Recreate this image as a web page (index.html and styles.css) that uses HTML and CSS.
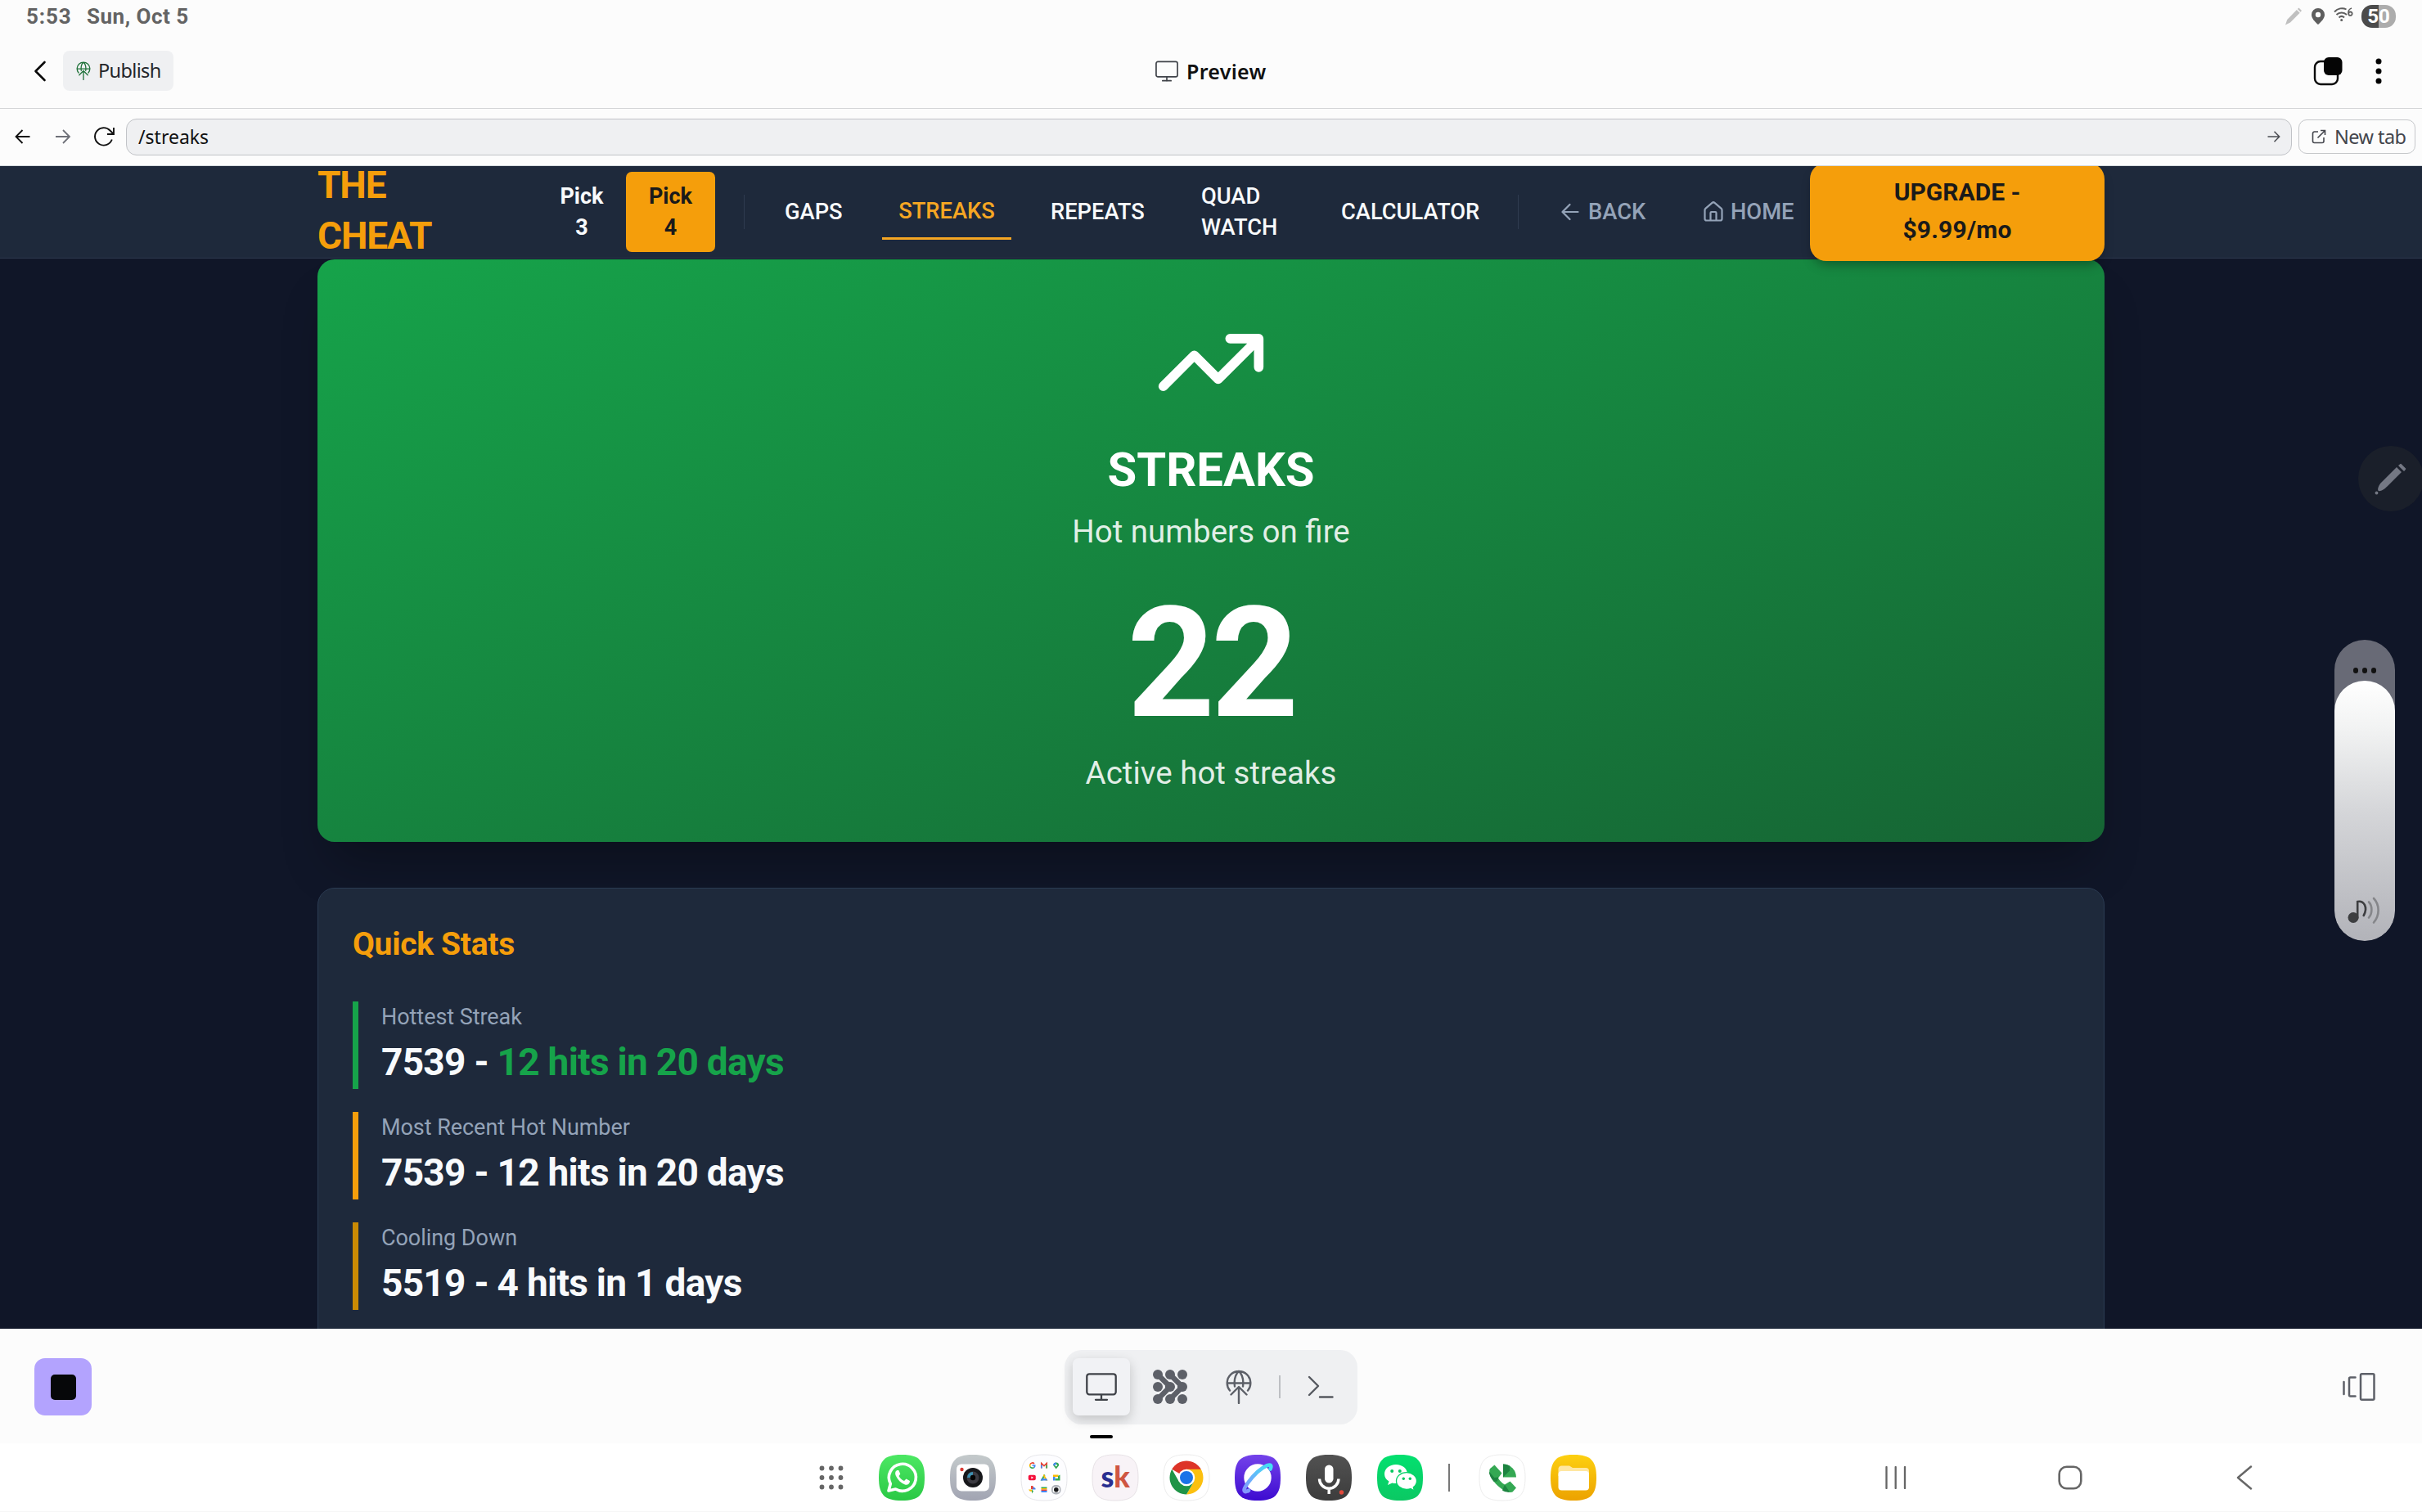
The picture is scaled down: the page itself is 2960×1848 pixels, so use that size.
FILE: index.html
```html
<!DOCTYPE html>
<html lang="en">
<head>
<meta charset="utf-8">
<title>Preview</title>
<link rel="stylesheet" href="styles.css">
</head>
<body>
<div class="screen">
  <header class="status">
    <span class="clock">5:53</span><span class="date">Sun, Oct 5</span>
    <div class="status-icons">
      <svg class="st-pen" width="22" height="22" viewBox="0 0 22 22"><path d="M17.500 .5l3.500 3.500-1.500 1.700-3.600-3.600zM14.900 3l3.800 3.700L7 18.500 1 21.500 3.200 15z" fill="#c0c0c0"/></svg>
      <svg class="st-pin" width="18" height="22" viewBox="0 0 18 22"><path d="M9 1a8 8 0 0 0-8 8c0 4.500 4 8.500 8 12 4-3.500 8-7.500 8-12a8 8 0 0 0-8-8zm0 4.800a3.200 3.200 0 1 1 0 6.400 3.200 3.200 0 0 1 0-6.400z" fill="#5e5e5e" fill-rule="evenodd"/></svg>
      <svg class="st-wifi" width="26" height="20" viewBox="0 0 26 20"><g fill="none" stroke="#5e5e5e" stroke-width="2"><path d="M2 6.500C6 2 12 1 16.500 3.500M4.500 10c3.500-3.500 9-3.500 12.500 0M7.500 13.500c2-2 4.500-2 6.500 0"/><path d="M23 2c-3 1-4.500 4-4 6.500M21.500 6.500a2.200 2.200 0 1 1-.1 4.400 2.200 2.200 0 0 1 .1-4.400z" stroke-width="1.800"/></g><circle cx="10.700" cy="16.500" r="1.500" fill="#5e5e5e"/></svg>
      <span class="battery">50</span>
    </div>
  </header>

  <div class="titlebar">
    <svg class="back" width="16" height="26" viewBox="0 0 16 26"><path d="M13.500 2L2.500 13l11 11" fill="none" stroke="#0b0b0b" stroke-width="2.600" stroke-linecap="round" stroke-linejoin="round"/></svg>
    <button class="publish"><svg width="18" height="23" viewBox="0 0 32 42"><use href="#globe-up"/></svg><span>Publish</span></button>
    <div class="title"><svg width="28" height="26" viewBox="0 0 38 34"><use href="#monitor"/></svg><span>Preview</span></div>
    <div class="title-actions">
      <svg width="36" height="36" viewBox="0 0 36 36"><rect x="2" y="6" width="28" height="28" rx="7" fill="none" stroke="#0b0b0b" stroke-width="2.400"/><rect x="13" y="1" width="22.500" height="22" rx="6" fill="#050505"/></svg>
      <svg width="10" height="34" viewBox="0 0 10 34"><circle cx="5" cy="5" r="3.500"/><circle cx="5" cy="17" r="3.500"/><circle cx="5" cy="29" r="3.500"/></svg>
    </div>
  </div>

  <div class="urlbar">
    <svg width="20" height="20" viewBox="0 0 20 20"><path d="M18.500 10H2M9.500 2L1.500 10l8 8" fill="none" stroke="#111" stroke-width="1.800"/></svg>
    <svg width="20" height="20" viewBox="0 0 20 20"><path d="M1 10h16.500M10 2l8 8-8 8" fill="none" stroke="#6e7078" stroke-width="1.800"/></svg>
    <svg width="26" height="26" viewBox="0 0 26 26"><path d="M22.800 16.500A10.700 10.700 0 1 1 20.500 5.500l4 4M25 2v8h-8" fill="none" stroke="#111" stroke-width="1.900"/></svg>
    <div class="url"><span>/streaks</span><svg width="16" height="16" viewBox="0 0 16 16"><path d="M.5 8h14M8.500 1.800L14.700 8l-6.200 6.200" fill="none" stroke="#4a4c52" stroke-width="1.500"/></svg></div>
    <button class="newtab"><svg width="18" height="18" viewBox="0 0 18 18"><path d="M8 3H3.500A2 2 0 0 0 1.500 5v9.500a2 2 0 0 0 2 2H13a2 2 0 0 0 2-2V10M11 1.500h5.500V7M16.500 1.500L7.500 10.500" fill="none" stroke="#44464d" stroke-width="1.600"/></svg><span>New tab</span></button>
  </div>

  <main class="site">
    <nav class="nav">
      <div class="logo"><span>THE</span><span>CHEAT</span></div>
      <div class="pick">Pick<br>3</div>
      <div class="pick on">Pick<br>4</div>
      <i class="rule"></i>
      <a class="n-gaps">GAPS</a>
      <a class="n-streaks current">STREAKS</a>
      <a class="n-repeats">REPEATS</a>
      <a class="n-quad">QUAD<br>WATCH</a>
      <a class="n-calc">CALCULATOR</a>
      <i class="rule rule2"></i>
      <a class="n-back muted"><svg width="22" height="22" viewBox="0 0 22 22"><path d="M20.500 11H2M10.500 2L1.500 11l9 9" fill="none" stroke="#94a3b8" stroke-width="2.200" stroke-linecap="round" stroke-linejoin="round"/></svg>BACK</a>
      <a class="n-home muted"><svg width="28" height="28" viewBox="0 0 24 24"><path d="M15 21v-8a1 1 0 0 0-1-1h-4a1 1 0 0 0-1 1v8M3 10a2 2 0 0 1 .709-1.528l7-5.999a2 2 0 0 1 2.582 0l7 5.999A2 2 0 0 1 21 10v9a2 2 0 0 1-2 2H5a2 2 0 0 1-2-2z" fill="none" stroke="#94a3b8" stroke-width="1.900" stroke-linejoin="round"/></svg>HOME</a>
      <button class="upgrade">UPGRADE -<br><span>$9.99/mo</span></button>
    </nav>

    <section class="hero">
      <svg width="140" height="140" viewBox="0 0 24 24"><path d="M22 7l-8.500 8.500-5-5L2 17M16 7h6v6" fill="none" stroke="#fff" stroke-width="2" stroke-linecap="round" stroke-linejoin="round"/></svg>
      <h1>STREAKS</h1>
      <p class="sub">Hot numbers on fire</p>
      <div class="count">22</div>
      <p class="caption">Active hot streaks</p>
    </section>

    <section class="stats">
      <h2>Quick Stats</h2>
      <div class="stat green"><small>Hottest Streak</small><b>7539 - <em>12 hits in 20 days</em></b></div>
      <div class="stat amber"><small>Most Recent Hot Number</small><b>7539 - 12 hits in 20 days</b></div>
      <div class="stat gold"><small>Cooling Down</small><b>5519 - 4 hits in 1 days</b></div>
    </section>
  </main>

  <footer class="tools">
    <button class="stop"><i></i></button>
    <div class="pill">
      <span class="tool"><svg width="38" height="34" viewBox="0 0 38 34"><use href="#monitor"/></svg><i class="marker"></i></span>
      <svg class="t-flow" width="42" height="42" viewBox="0 0 42 42"><g fill="#5d6068"><circle cx="6" cy="6" r="6"/><circle cx="21" cy="6" r="6"/><circle cx="36" cy="6" r="6"/><circle cx="6" cy="21" r="6"/><circle cx="21" cy="21" r="6"/><circle cx="36" cy="21" r="6"/><circle cx="6" cy="36" r="6"/><circle cx="21" cy="36" r="6"/><circle cx="36" cy="36" r="6"/></g><path d="M6 6l15 15L6 36M21 6l15 15-15 15" fill="none" stroke="#5d6068" stroke-width="6.500"/><path d="M15 17.500v7l-2 2.500 4.500-2zM30 17.500v7l-2 2.500 4.500-2z" fill="#5d6068"/></svg>
      <svg class="t-globe" width="32" height="42" viewBox="0 0 32 42"><use href="#globe-up"/></svg>
      <i class="vline"></i>
      <svg class="t-term" width="32" height="28" viewBox="0 0 32 28"><path d="M2 2l11 11L2 24M15 26.500h15.500" fill="none" stroke="#55585f" stroke-width="2.400" stroke-linecap="round" stroke-linejoin="round"/></svg>
    </div>
    <svg class="panels" width="40" height="34" viewBox="0 0 40 34"><g fill="none" stroke="#5d6068" stroke-width="2.500" stroke-linecap="round"><rect x="22" y="1.300" width="16.500" height="31.400" rx="1.500"/><path d="M15.500 5.500H9.500A1.500 1.500 0 0 0 8 7v20a1.500 1.500 0 0 0 1.500 1.500h6M1.500 11v15"/></g></svg>
  </footer>

  <div class="dock">
    <div class="apps">
      <svg class="grid" width="58" height="58" viewBox="0 0 58 58"><g fill="#666"><circle cx="17.500" cy="17.500" r="2.900"/><circle cx="29" cy="17.500" r="2.900"/><circle cx="40.500" cy="17.500" r="2.900"/><circle cx="17.500" cy="29" r="2.900"/><circle cx="29" cy="29" r="2.900"/><circle cx="40.500" cy="29" r="2.900"/><circle cx="17.500" cy="40.500" r="2.900"/><circle cx="29" cy="40.500" r="2.900"/><circle cx="40.500" cy="40.500" r="2.900"/></g></svg>
      <svg width="58" height="58" viewBox="0 0 58 58"><use href="#tile" fill="url(#g-wa)"/><path d="M13 45l2.300-8.500A16.500 16.500 0 1 1 21.500 43z" fill="none" stroke="#fff" stroke-width="3.600" stroke-linejoin="round"/><path d="M23.500 20c-2.500 1-3 4-1.500 7 2.500 5 6 8.500 11 10.500 3 1 6-1 6-4.500l-4.500-2.500-2.500 2.500c-3-1.200-5-3.200-6.500-6l1.800-2.500-2-4.500z" fill="#fff"/></svg>
      <svg width="58" height="58" viewBox="0 0 58 58"><use href="#tile" fill="url(#g-cam)"/><rect x="9" y="12.500" width="40" height="33" rx="6" fill="#fff"/><circle cx="15.500" cy="19" r="2.200" fill="#d83a34"/><circle cx="29" cy="29" r="12" fill="#17181b"/><circle cx="29" cy="29" r="7.500" fill="#3c3b42"/><path d="M22 29a7 7 0 0 1 7-7v4a3 3 0 0 0-3 3z" fill="#3d8fb0"/><circle cx="29" cy="29" r="3.200" fill="#050505"/></svg>
      <svg width="60" height="60" viewBox="-1 -1 60 60"><use href="#tile" fill="#fdfdff" stroke="#e6e6ea"/><g fill="none" stroke-width="1.700"><path d="M17 11.800a3.200 3.200 0 0 0-5 .8" stroke="#ea4335"/><path d="M12 12.600a3.500 3.500 0 0 0 0 3" stroke="#fbbc04"/><path d="M12 15.600a3.200 3.200 0 0 0 4.700 1" stroke="#34a853"/><path d="M16.700 16.600a3 3 0 0 0 1-2.600h-3.200" stroke="#4285f4"/><path d="M25.800 17.500v-6l3.200 3 3.200-3v6" stroke="#ea4335"/><path d="M25.800 17.500v-4" stroke="#4285f4"/><path d="M32.200 17.500v-4" stroke="#34a853"/></g><path d="M43.700 10.500a3.500 3.500 0 0 0-3.500 3.500l3.500 4.500 3.500-4.500a3.500 3.500 0 0 0-3.500-3.500z" fill="#34a853"/><path d="M40.200 14a3.500 3.500 0 0 1 3.500-3.500v3.500z" fill="#4285f4"/><circle cx="43.700" cy="14" r="1.200" fill="#fff"/><rect x="9.800" y="25.800" width="9" height="6.400" rx="1.800" fill="#f5103c"/><path d="M13.400 27.500v3l2.600-1.500z" fill="#fff"/><path d="M29 25l-4.300 7.500h2.500L30.500 26z" fill="#34a853"/><path d="M29 25l4.300 7.500h-2.500L27.700 26z" fill="#fbbc04"/><path d="M24.700 32.500h8.600l-1.200-2.200h-6.200z" fill="#4285f4"/><rect x="40" y="25.500" width="6.500" height="2.500" fill="#fbbc04"/><path d="M40 28h2.500v4.500H40z" fill="#4285f4"/><path d="M42.500 30h6v2.500h-6zM46 27l2.500-1.500v6H46z" fill="#34a853"/><path d="M14 39v4.500h4.500V42z" fill="#4285f4"/><path d="M10 43.500h4V46l-2.500-.5z" fill="#fbbc04"/><path d="M14 43.500V48.500l2-3z" fill="#34a853"/><path d="M15.500 39h-2.500v4h2.500z" fill="#ea4335"/><path d="M25.500 40.500h7V42h-7z" fill="#34a853"/><path d="M25.500 42h7v1.500h-7z" fill="#fbbc04"/><path d="M25.500 43.500h7V45h-7z" fill="#ea4335"/><path d="M25.500 45h7v2h-7z" fill="#4285f4"/><rect x="38" y="38" width="11.500" height="11.500" rx="5" fill="#adb1b8"/><rect x="39.800" y="40.500" width="8" height="6.500" rx="1.500" fill="#fff"/><circle cx="43.800" cy="43.800" r="2.800" fill="#17181b"/></svg>
      <span class="sk"><svg width="58" height="58" viewBox="0 0 58 58"><use href="#tile" fill="#f8f3f7" stroke="#e7e2e6"/></svg><span><b>s</b><b class="k">k</b></span></span>
      <svg width="58" height="58" viewBox="0 0 58 58"><use href="#tile" fill="#fff" stroke="#ececec"/><path d="M29 29L11.250 18.750A20.500 20.500 0 0 1 46.750 18.750z" fill="#dd3428"/><path d="M29 18.750h17.750A20.500 20.500 0 0 1 29 49.500l9-15.500z" fill="#fcc010"/><path d="M11.250 18.750A20.500 20.500 0 0 0 29 49.500L38 34l-9 5-9-5z" fill="#1f9447"/><circle cx="29" cy="29" r="10.300" fill="#fff"/><circle cx="29" cy="29" r="8" fill="#1a73e8"/></svg>
      <svg width="58" height="58" viewBox="0 0 58 58"><use href="#tile" fill="url(#g-net)"/><circle cx="29" cy="29" r="16.700" fill="#fff"/><path d="M44.500 18.500c2-4.500.5-6-4-4.300C33 17.500 24 26 17 35.500c-3.500 5-5.500 8.500-4 10 1 1 3 .5 5-.8" fill="none" stroke="url(#g-ring)" stroke-width="4.600" stroke-linecap="round"/></svg>
      <svg width="58" height="58" viewBox="0 0 58 58"><use href="#tile" fill="url(#g-mic)"/><rect x="24" y="13.500" width="10.500" height="22" rx="5.250" fill="#fff"/><path d="M17.500 30.500a11.700 11.700 0 0 0 23.400 0M29.200 42v7" fill="none" stroke="#fff" stroke-width="3.400"/><circle cx="44.500" cy="47" r="2.700" fill="#e3493b"/></svg>
      <svg width="58" height="58" viewBox="0 0 58 58"><use href="#tile" fill="url(#g-wc)"/><path d="M24 13c-8 0-14 5-14 11.500 0 4 2 7 5.500 9L14 38l5.500-2.500c7.500 2 18.500-2 18.500-11C38 18 32 13 24 13z" fill="#fff"/><path d="M37 22.700c-7 0-12.500 4.500-12.500 10.300S30 43.300 37 43.300c1.800 0 3.500-.2 5-.8l4.500 2.500-1.200-4.300c2.700-2 4.200-4.600 4.200-7.700 0-5.800-5.500-10.300-12.500-10.300z" fill="#fff" stroke="#05d268" stroke-width="1.300"/><g fill="#05c85f"><circle cx="19.200" cy="21" r="2"/><circle cx="28.800" cy="21" r="2"/><circle cx="33.300" cy="30.300" r="1.700"/><circle cx="41.300" cy="30.300" r="1.700"/></g></svg>
      <i class="dock-line"></i>
      <svg width="58" height="58" viewBox="0 0 58 58"><use href="#tile" fill="#fff" stroke="#ededed"/><path d="M19.500 13.500l-5.500 4.500c-2.500 3.500 1.500 13.500 9 20.500s15 9.500 18.500 8l4.500-5-7.500-8-6.500 4c-3.500-2-6-4.500-8-8l4.500-6z" fill="#34a853"/><path d="M12.800 21.500l6.500 7.500 5-.5-1.500 5-4 .5c-4-4.500-6-9-6-12.500zM32 37.500l6 9.200c-3 .3-6.500-.5-9-2.200z" fill="#1d8340"/><path d="M30 12.500A16 16 0 0 1 46 28.500H30z" fill="#34a853"/><path d="M30 12.500c3 0 5.500.7 8 2v6L30 28.500z" fill="#1d8340"/></svg>
      <svg width="58" height="58" viewBox="0 0 58 58"><use href="#tile" fill="url(#g-file)"/><path d="M10.500 19a4 4 0 0 1 4-4.500h9.500l4 2.500h16a4 4 0 0 1 4 4v6h-37.500z" fill="#ffe7a0"/><rect x="10.500" y="21" width="37.500" height="23.500" rx="4" fill="#fff"/></svg>
    </div>
    <svg class="k-recents" width="26" height="28" viewBox="0 0 26 28"><path d="M1.500 1v26M12.700 1v26M24 1v26" stroke="#666" stroke-width="2.300" stroke-linecap="round"/></svg>
    <svg class="k-home" width="30" height="30" viewBox="0 0 30 30"><rect x="1.700" y="1.700" width="26.600" height="26.600" rx="9" fill="none" stroke="#666" stroke-width="2.600"/></svg>
    <svg class="k-back" width="20" height="30" viewBox="0 0 20 30"><path d="M18 1.500L2 15l16 13.500" fill="none" stroke="#666" stroke-width="2.400" stroke-linecap="round" stroke-linejoin="round"/></svg>
  </div>

  <div class="edge-pen"><svg width="40" height="40" viewBox="0 0 40 40"><g fill="#747884"><path d="M28 6l6 6-17.500 17.500C13 33 8 36 6 35s-.5-7 4-11z"/><path d="M31 4l2-1.500L38.500 8 37 10z" stroke="#747884" stroke-width="1.500" stroke-linejoin="round"/><circle cx="3.500" cy="37.500" r="1.900"/></g></svg></div>
  <div class="volume">
    <div class="vol-dots"><i></i><i></i><i></i></div>
    <div class="vol-fill"><svg width="40" height="34" viewBox="0 0 40 34"><ellipse cx="7" cy="25.500" rx="6.500" ry="6.500" fill="#3d3e40"/><path d="M12.200 26V6c8-1.500 13 7 7.500 17" fill="none" stroke="#3d3e40" stroke-width="2.600" stroke-linecap="round"/><path d="M26 6.500c4.500 4.500 4.500 14 0 19M32 2c7.500 8 7.500 21 0 29.500" fill="none" stroke="#85868a" stroke-width="2.600" stroke-linecap="round"/></svg></div>
  </div>
</div>

<svg class="defs" width="0" height="0">
  <defs>
    <g id="monitor" fill="none" stroke="#3f4248" stroke-width="2.300" stroke-linecap="round"><rect x="1.300" y="1.300" width="35.400" height="25" rx="3"/><path d="M19 27v6M12 32.800h14"/></g>
    <g id="globe-up" fill="none" stroke="currentColor" stroke-width="2.400" stroke-linecap="round" stroke-linejoin="round"><path d="M5 25.500A14.300 14.300 0 1 1 27 25.500M2 16.500h28M11 20.500C10 13 11.500 6 16 1.800 20.500 6 22 13 21 20.500M16 41V21.500M6.500 30.500l9.500-9.500 9.500 9.500"/></g>
    <path id="tile" d="M29 1C50 1 57 8 57 29S50 57 29 57 1 50 1 29 8 1 29 1z"/>
    <linearGradient id="g-wa" x2="0" y2="1"><stop stop-color="#4ce863"/><stop offset="1" stop-color="#2ac845"/></linearGradient>
    <linearGradient id="g-cam" x2="0" y2="1"><stop stop-color="#c4cacb"/><stop offset="1" stop-color="#a1a4b2"/></linearGradient>
    <linearGradient id="g-net" x2="0" y2="1"><stop stop-color="#7443ea"/><stop offset="1" stop-color="#3d0bd0"/></linearGradient>
    <linearGradient id="g-ring" x1="1" x2="0" y2="1"><stop stop-color="#41e2f3"/><stop offset="1" stop-color="#8494ff"/></linearGradient>
    <linearGradient id="g-mic" x2="0" y2="1"><stop stop-color="#525252"/><stop offset="1" stop-color="#3c3c3c"/></linearGradient>
    <linearGradient id="g-wc" x2="0" y2="1"><stop stop-color="#03e06f"/><stop offset="1" stop-color="#0bc863"/></linearGradient>
    <linearGradient id="g-file" x2="0" y2="1"><stop stop-color="#fdd010"/><stop offset="1" stop-color="#eca200"/></linearGradient>
  </defs>
</svg>
</body>
</html>
```
FILE: styles.css
```css
* { box-sizing: border-box; margin: 0; padding: 0; }
body { width: 2960px; height: 1848px; overflow: hidden; background: #fcfcfc; font-family: Roboto, "Liberation Sans", sans-serif; }
svg { display: block; flex: none; }
i { display: block; flex: none; font-style: normal; }
button { border: 0; font: inherit; }
a, span, b, small { white-space: nowrap; }
.defs { position: absolute; }
.screen { position: relative; width: 2960px; height: 1848px; display: flex; flex-direction: column; overflow: hidden; }

.status { height: 40px; display: flex; padding-left: 32px; color: #636363; font-weight: 700; font-size: 26px; line-height: 40px; }
.clock { width: 74px; letter-spacing: .9px; }
.date { letter-spacing: .5px; }
.status-icons { margin-left: auto; padding-right: 32px; display: flex; align-items: center; }
.st-pin { margin-left: 10px; }
.st-wifi { margin: -4px 0 0 9px; }
.battery { width: 42px; height: 28px; margin-left: 9px; border-radius: 13px; background: linear-gradient(90deg, #4b4b4b 50%, #acacac 50%); color: #fff; font-size: 24px; line-height: 28px; text-align: center; }

.titlebar { height: 93px; flex: none; border-bottom: 1px solid #d4d5d7; display: grid; grid-template-columns: 42px 35px 1335px 137px 1fr; align-items: center; padding: 1px 48px 0 0; }
.titlebar .back { grid-column: 2; margin-left: -1px; }
.publish { grid-column: 3; width: 135px; height: 49px; border-radius: 8px; background: #eff0f2; display: flex; align-items: center; gap: 9px; padding-left: 16px; font: 400 23.500px/49px "Noto Sans", sans-serif; letter-spacing: -.65px; color: #24262b; }
.publish svg { color: #20723a; }
.title { grid-column: 4; display: flex; align-items: center; gap: 10px; font: 600 25px/40px "Noto Sans", sans-serif; letter-spacing: .3px; color: #111; }
.title-actions { grid-column: 5; display: flex; align-items: center; justify-content: flex-end; gap: 39px; }

.urlbar { height: 70px; flex: none; display: flex; align-items: center; padding: 0 8px 1px 18px; border-bottom: 1px solid #d4dade; }
.urlbar > svg:nth-child(2) { margin-left: 29px; }
.urlbar > svg:nth-child(3) { margin-left: 27px; }
.url { flex: 1; height: 45px; margin: 0 8px 0 14px; border: 1px solid #c1c3c7; border-radius: 13px; background: #eff0f2; display: flex; align-items: center; justify-content: space-between; padding: 0 13px 0 14px; font: 400 23px/42px "Noto Sans", sans-serif; color: #111; letter-spacing: -.4px; }
.newtab { width: 143px; height: 42px; border: 1px solid #c5c7ca; border-radius: 10px; background: #fcfcfc; display: flex; align-items: center; gap: 10px; padding-left: 15px; font: 400 23.500px/40px "Noto Sans", sans-serif; letter-spacing: -.55px; color: #44464d; }
.url { letter-spacing: 0; }

.site { height: 1421px; flex: none; overflow: hidden; background: #101628; }
.nav { height: 113px; background: #1e293b; border-bottom: 1px solid #2d394e; display: flex; align-items: center; padding-left: 388px; color: #f8fafc; font-weight: 500; font-size: 27.300px; line-height: 38px; position: relative; z-index: 2; }
.logo { width: 269px; display: flex; flex-direction: column; gap: 14px; margin-top: -5px; font-weight: 700; font-size: 46px; line-height: 48px; letter-spacing: -1.150px; color: #f59e0b; }
.pick { width: 108px; height: 98px; padding-top: 11px; border-radius: 7px; text-align: center; font-weight: 700; font-size: 27px; }
.pick.on { background: #f59e0b; color: #1a1a1a; width: 109px; }
.rule { width: 1px; height: 42px; background: #2f3b50; margin-left: 35px; }
.rule2 { margin-left: 47px; }
.n-gaps { margin-left: 49px; width: 119px; }
.n-streaks { width: 158px; text-align: center; }
.current { height: 68px; line-height: 67px; color: #f5a623; border-bottom: 3px solid #f5a623; }
.n-repeats { margin-left: 48px; width: 184px; }
.n-quad { width: 171px; }
.n-calc { width: 169px; }
.muted { color: #94a3b8; display: flex; align-items: center; gap: 11px; }
.n-back { margin-left: 52px; width: 172px; }
.n-home { width: 132px; gap: 7px; }
.upgrade { width: 360px; height: 120px; border-radius: 20px; background: #f59e0b; color: #1a1a1a; font-weight: 700; font-size: 30px; line-height: 46px; box-shadow: 0 8px 14px -4px rgba(0,0,0,.35); padding-bottom: 2px; }
.upgrade span { letter-spacing: .2px; }

.hero { width: 2184px; height: 712px; margin: 1px auto 0; border-radius: 21px; background: linear-gradient(to bottom right, #16a34a, #166534); box-shadow: 0 40px 60px -18px rgba(0,0,0,.3); color: #fff; display: flex; flex-direction: column; align-items: center; padding-top: 56px; text-align: center; }
.hero h1 { font-size: 58px; line-height: 80px; letter-spacing: 0; margin-top: 21px; }
.sub, .caption { font-size: 38.500px; line-height: 54px; color: rgba(255,255,255,.88); }
.sub { margin-top: 9px; }
.count { font-weight: 700; font-size: 187px; line-height: 187px; letter-spacing: -4.700px; margin-top: 41px; }
.caption { margin-top: 13px; }

.stats { width: 2184px; height: 700px; margin: 56px auto 0; background: #1e293b; border: 1px solid #2b3b52; border-radius: 21px; padding: 41px 42px; }
.stats h2 { color: #f59e0b; font-size: 39px; line-height: 54px; font-weight: 700; letter-spacing: -.3px; margin-bottom: 43px; }
.stat { height: 107px; margin-bottom: 28px; border-left: 7px solid #16a34a; padding-left: 28px; display: flex; flex-direction: column; }
.stat small { font-size: 27px; line-height: 38px; color: #94a3b8; letter-spacing: -.05px; }
.stat b { font-size: 46px; line-height: 62px; letter-spacing: -.720px; color: #f8fafc; margin-top: 5px; }
.stat em { font-style: normal; color: #16a34a; }
.amber { border-color: #f59e0b; }
.gold { border-color: #ca8a04; }

.tools { height: 140px; flex: none; display: flex; align-items: center; justify-content: space-between; padding: 2px 57px 0 42px; background: #fcfcfc; }
.stop { width: 70px; height: 70px; border-radius: 13px; background: #b3a3fe; display: grid; place-items: center; }
.stop i { width: 31px; height: 31px; border-radius: 5px; background: #060709; }
.pill { width: 358px; height: 91px; margin-left: -16px; border-radius: 21px; background: #eff0f2; display: flex; align-items: center; padding-left: 10px; color: #5d6068; }
.tool { position: relative; width: 70px; height: 70px; border-radius: 7px; background: #f1f2f5; box-shadow: 0 5px 14px rgba(0,0,0,.19); display: grid; place-items: center; }
.marker { position: absolute; left: 21px; bottom: -28px; width: 28px; height: 4px; border-radius: 2px; background: #000; }
.t-flow { margin-left: 28px; }
.t-globe { margin-left: 47px; }
.vline { width: 2px; height: 28px; background: #bdbfc3; margin-left: 33px; }
.t-term { margin-left: 33px; }

.dock { height: 84px; flex: none; display: flex; align-items: center; background: #fff; border-bottom: 1px solid #f6f6f6; padding: 1px 0 0 987px; }
.apps { display: flex; align-items: center; gap: 29px; width: 1317px; }
.apps > svg:nth-child(2) { margin-left: -1px; }
.apps > svg:nth-child(4) { margin: 0 -1px; }
.sk { position: relative; width: 58px; height: 58px; }
.sk > span { position: absolute; inset: 0; text-align: center; font: 900 36px/54px Lato, sans-serif; color: #2a2f90; letter-spacing: -.3px; }
.sk b { font-weight: 900; }
.sk .k { color: #cf5642; }
.dock-line { width: 2px; height: 34px; background: #777; margin: 0 6px 0 1px; }
.k-home { margin-left: 185px; }
.k-back { margin-left: 188px; }

.edge-pen { position: absolute; left: 2882px; top: 545px; width: 80px; height: 80px; border-radius: 50%; background: #1a1f2a; display: grid; place-items: center; padding-right: 2px; }
.volume { position: absolute; left: 2853px; top: 782px; width: 74px; height: 368px; border-radius: 37px; background: #686a76; overflow: hidden; }
.vol-dots { height: 50px; padding-top: 34px; display: flex; justify-content: center; gap: 4.500px; }
.vol-dots i { width: 6.500px; height: 6.500px; border-radius: 50%; background: #111; }
.vol-fill { height: 318px; border-radius: 37px; background: linear-gradient(#fff, #f2f3f3 18%, #d5d6d9 50%, #b2b3b9); display: flex; align-items: flex-end; padding: 0 0 20px 16px; }
```
